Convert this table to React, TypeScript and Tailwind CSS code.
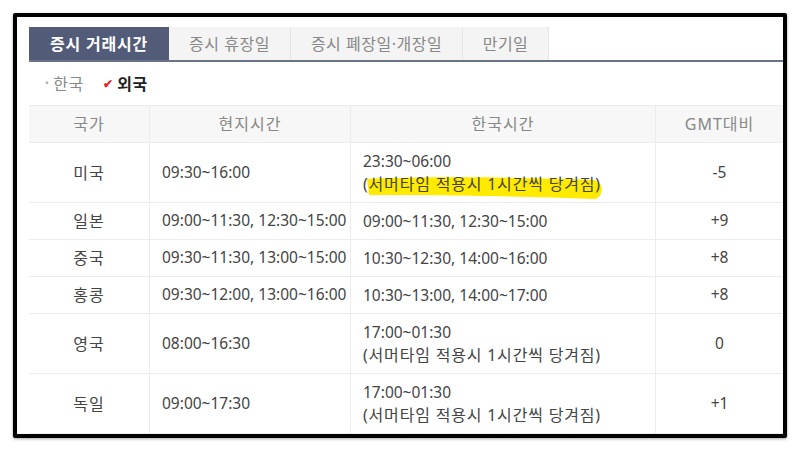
import React from "react"

// Foreign stock exchange trading hours — tabbed table inside a rough black frame.

const FONT = { fontFamily: '"Noto Sans", "Noto Sans CJK KR", sans-serif' }

type Row = {
  country: string
  local: string
  korea: string
  note?: boolean
  highlight?: boolean
  gmt: string
}

const ROWS: Row[] = [
  { country: "미국", local: "09:30~16:00", korea: "23:30~06:00", note: true, highlight: true, gmt: "-5" },
  { country: "일본", local: "09:00~11:30, 12:30~15:00", korea: "09:00~11:30, 12:30~15:00", gmt: "+9" },
  { country: "중국", local: "09:30~11:30, 13:00~15:00", korea: "10:30~12:30, 14:00~16:00", gmt: "+8" },
  { country: "홍콩", local: "09:30~12:00, 13:00~16:00", korea: "10:30~13:00, 14:00~17:00", gmt: "+8" },
  { country: "영국", local: "08:00~16:30", korea: "17:00~01:30", note: true, gmt: "0" },
  { country: "독일", local: "09:00~17:30", korea: "17:00~01:30", note: true, gmt: "+1" },
]

const TABS = [
  { label: "증시 거래시간", w: "w-[140px]", active: true },
  { label: "증시 휴장일", w: "w-[122px]" },
  { label: "증시 폐장일·개장일", w: "w-[172px]" },
  { label: "만기일", w: "w-[86px]" },
]

function Highlight() {
  return (
    <svg className="absolute left-[4px] top-[1px]" width="236" height="26" viewBox="0 0 236 26">
      <path
        d="M0 5 C60 2 150 3 228 6 L234 11 C236 17 234 23 228 25 C150 22 60 21 2 21 Z"
        fill="#ffea00"
      />
    </svg>
  )
}

function Note({ highlight }: { highlight?: boolean }) {
  return (
    <span className="relative block text-[16px] tracking-[0.8px]">
      {highlight && <Highlight />}
      <span className="relative">(서머타임 적용시 1시간씩 당겨짐)</span>
    </span>
  )
}

const HEAD =
  "flex h-[38px] items-center justify-center border-y border-[#ececec] bg-[#f7f7f7] text-[16px] tracking-[1px] text-[#888]"

export default function App() {
  return (
    <div className="h-[449px] w-[800px] bg-white pt-[13px] pl-[13px]" style={FONT}>
      <div className="h-[425px] w-[774px] overflow-hidden rounded-[2px] border-4 border-black bg-white pt-[10px] pl-[12px] shadow-[0_1px_3px_rgba(0,0,0,0.35)]">
        {/* Tabs */}
        <div className="flex border-b-2 border-[#6b7389]">
          {TABS.map((t) =>
            t.active ? (
              <div
                key={t.label}
                className={`${t.w} flex h-[33px] items-center justify-center bg-[#525c78] text-[16px] font-bold tracking-[0.8px] text-white`}
              >
                {t.label}
              </div>
            ) : (
              <div
                key={t.label}
                className={`${t.w} flex h-[33px] items-center justify-center border-r border-[#e6e6e6] bg-[#f4f4f4] text-[16px] tracking-[0.5px] text-[#888]`}
              >
                {t.label}
              </div>
            )
          )}
        </div>

        {/* Region filter */}
        <div className="flex h-[43px] items-center pl-[16px] text-[16px] tracking-[0.5px]">
          <span className="mr-[4px] text-[10px] text-[#aaa]">•</span>
          <span className="text-[#888]">한국</span>
          <span className="ml-[19px] mr-[4px] text-[12px] font-bold text-[#e0202c]">✔</span>
          <span className="font-bold text-[#222]">외국</span>
        </div>

        {/* Table */}
        <div className="grid grid-cols-[120px_201px_305px_128px] text-[15.5px] text-[#444]">
          <div className={HEAD}>국가</div>
          <div className={`${HEAD} border-l`}>현지시간</div>
          <div className={`${HEAD} border-l`}>한국시간</div>
          <div className={`${HEAD} border-l`}>GMT대비</div>

          {ROWS.map((r) => {
            const h = r.note ? "h-[60px]" : "h-[37px]"
            return (
              <React.Fragment key={r.country}>
                <div className={`${h} flex items-center justify-center border-b border-[#ececec] text-[16px] tracking-[1px]`}>
                  {r.country}
                </div>
                <div className={`${h} flex items-center border-b border-l border-[#ececec] pl-[12px]`}>{r.local}</div>
                <div className={`${h} flex flex-col justify-center border-b border-l border-[#ececec] pl-[12px] leading-[23px]`}>
                  <span>{r.korea}</span>
                  {r.note && <Note highlight={r.highlight} />}
                </div>
                <div className={`${h} flex items-center justify-center border-b border-l border-[#ececec]`}>{r.gmt}</div>
              </React.Fragment>
            )
          })}
        </div>
      </div>
    </div>
  )
}
